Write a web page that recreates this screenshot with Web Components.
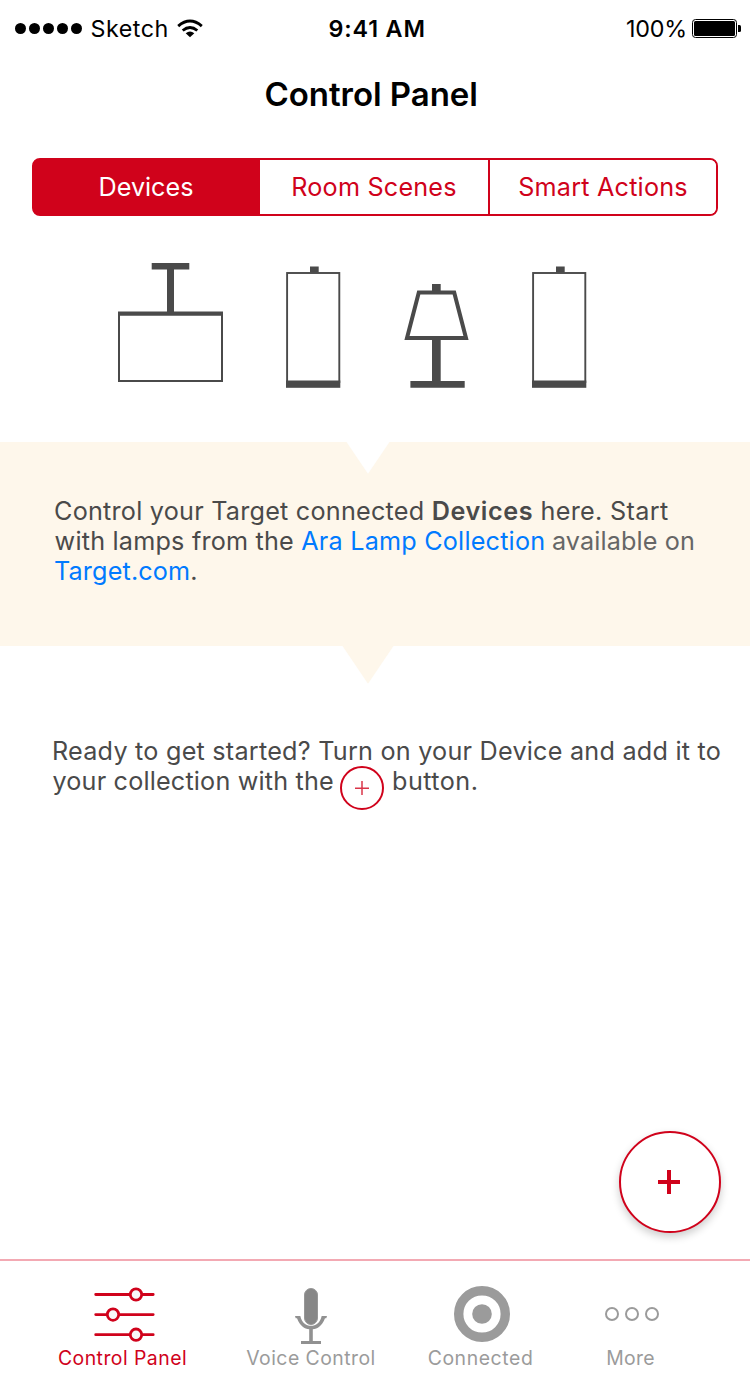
<!DOCTYPE html>
<html lang="en">
<head>
<meta charset="utf-8">
<title>Control Panel</title>
<style>
html,body{margin:0;padding:0;background:#fff}
body{width:750px;height:1386px;overflow:hidden;font-family:Inter,"Liberation Sans",sans-serif}
</style>
</head>
<body>
<control-app></control-app>
<script>
function define(name, css, html) {
  customElements.define(name, class extends HTMLElement {
    constructor() {
      super();
      const t = document.createElement('template');
      t.innerHTML = '<style>svg{display:block}' + css + '</style>' + html;
      this.attachShadow({ mode: 'open' }).appendChild(t.content.cloneNode(true));
    }
  });
}

define('status-bar', `
:host{display:grid;grid-template-columns:1fr auto 1fr;height:57px;align-items:center;color:#000;font-size:23.3px;line-height:28px;white-space:nowrap}
.left{display:flex;align-items:center;padding-left:15px}
.carrier{letter-spacing:.5px;margin:0 8px 0 7.5px}
.time{font-weight:600;letter-spacing:.85px;width:98px;margin-left:5px}
.right{display:flex;align-items:center;justify-content:flex-end;padding-right:9px}
.pct{letter-spacing:-.19px;width:60px;margin-right:6px}
`, `
<div class="left">
<svg width="68" height="12" viewBox="0 0 68 12"><circle cx="5.5" cy="5.5" r="5.5"/><circle cx="19.5" cy="5.5" r="5.5"/><circle cx="33.5" cy="5.5" r="5.5"/><circle cx="47.5" cy="5.5" r="5.5"/><circle cx="61.5" cy="5.5" r="5.5"/></svg>
<span class="carrier">Sketch</span>
<svg width="27" height="20" viewBox="177 18.500 27 20"><path d="M178.200 25.600Q190 15.600 201.800 25.600M182.700 30Q190 24 197.300 30" fill="none" stroke="#000" stroke-width="2.900"/><path d="M185.700 32.700Q190 29.200 194.300 32.700L190 36.700Z"/></svg>
</div>
<span class="time">9:41 AM</span>
<div class="right"><span class="pct">100%</span>
<svg width="49" height="19" viewBox="0 0 49 19"><rect x=".5" y=".5" width="44" height="18" rx="3" fill="none" stroke="#000"/><rect x="2" y="2" width="41" height="15" rx="1.500"/><path d="M46 6h1.500q1.500 0 1.500 1.500v4q0 1.500-1.500 1.500H46z"/></svg></div>
`);

define('nav-title', `
:host{display:block;height:101px;box-sizing:border-box;padding:17px 0 0 264.5px;font-size:33px;line-height:40px;font-weight:600;letter-spacing:-.04px;color:#000;white-space:nowrap}
`, `<slot></slot>`);

define('segment-item', `
:host{display:flex;align-items:center;justify-content:center;color:#d0021b;background:#fff;border-left:2px solid #d0021b;letter-spacing:.2px}
:host(:first-child){border-left:0}
:host(:last-child){border-radius:0 6px 6px 0}
:host([selected]){background:none;color:#fff;letter-spacing:-.02px}
`, `<slot></slot>`);

define('segmented-control', `
:host{display:grid;grid-template-columns:224px 230px 1fr;box-sizing:border-box;height:58px;margin:0 32px;border:2px solid #d0021b;border-radius:8px;background:linear-gradient(#d0021b,#d0021b) border-box 0 0/226px 100% no-repeat;font-size:25.2px;line-height:54px;white-space:nowrap}
`, `<slot></slot>`);

define('lamp-icon', `
:host{display:block}
svg{display:none}
:host([kind=pendant]) .pendant,:host([kind=column]) .column,:host([kind=table]) .table{display:block}
`, `
<svg class="pendant" width="105" height="126" viewBox="118 262 105 126" fill="#4a4a4a"><path d="M151.700 263h37.600v6.500H174V311.500h49v4.300H118v-4.300h49V269.500h-15.300z"/><rect x="119" y="314" width="103" height="67" fill="none" stroke="#4a4a4a" stroke-width="2"/></svg>
<svg class="column" width="55" height="126" viewBox="286 262 55 126" fill="#4a4a4a"><rect x="310" y="266.500" width="8.700" height="6"/><rect x="287.100" y="273" width="52.200" height="109" fill="none" stroke="#4a4a4a" stroke-width="1.900"/><rect x="286" y="380.500" width="54.300" height="7.300"/></svg>
<svg class="table" width="65" height="126" viewBox="404 262 65 126" fill="#4a4a4a"><path d="M432 284h8.700v7H432zM432 339h8.700v42h24v6.800h-54.300V381H432z"/><path d="M418.800 292.500h35.400L466 338h-59z" fill="none" stroke="#4a4a4a" stroke-width="4"/></svg>
`);

define('lamp-gallery', `
:host{display:flex;height:226px;box-sizing:border-box;padding:46px 0 0 118px}
lamp-icon+lamp-icon{margin-left:63px}
`, `<lamp-icon kind="pendant"></lamp-icon><lamp-icon kind="column"></lamp-icon><lamp-icon kind="table"></lamp-icon><lamp-icon kind="column"></lamp-icon>`);

define('text-line', `
:host{display:block;height:30px;line-height:30px;white-space:nowrap}
`, `<slot></slot>`);

define('info-banner', `
:host{display:block;position:relative;height:204px;box-sizing:border-box;padding:54px 0 0 54px;background:#fef7eb;color:#4a4a4a;font-size:25.2px}
.notch{position:absolute;left:346px;top:0}
.pointer{position:absolute;left:342px;top:204px}
b{font-weight:600;letter-spacing:.57px}
a{color:#007aff}
.dim{color:#666;margin-left:-.7px;letter-spacing:.12px}
`, `
<svg class="notch" width="44" height="32" viewBox="0 0 44 32"><path d="M0.500 0h43L22 31.700z" fill="#fff"/></svg>
<svg class="pointer" width="52" height="38" viewBox="0 0 52 38"><path d="M0.500 0h51L26 37.700z" fill="#fef7eb"/></svg>
<text-line style="letter-spacing:.23px">Control your Target connected <b>Devices</b> <span style="letter-spacing:.33px">here. Start</span></text-line>
<text-line style="letter-spacing:.205px;padding-left:.6px">with lamps from the <a>Ara Lamp Collection</a> <span class="dim">available on</span></text-line>
<text-line style="letter-spacing:.15px"><a>Target.com</a>.</text-line>
`);

define('get-started', `
:host{display:block;padding:90px 0 0 52px;color:#4a4a4a;font-size:25.2px}
.row{display:flex}
svg{margin:0 8px 0 5.500px;flex:none}
`, `
<text-line style="letter-spacing:.23px">Ready to get started? Turn on your Device and add it to</text-line>
<div class="row"><text-line style="letter-spacing:.175px;width:282px;padding-left:.5px">your collection with the</text-line>
<svg width="44" height="44" viewBox="340 766 44 44"><circle cx="362" cy="788" r="21" fill="#fff" stroke="#d0021b" stroke-width="2"/><path d="M355 788.300h14M362 781v14" stroke="#d0021b" stroke-opacity=".8" stroke-width="1.500"/></svg>
<text-line style="letter-spacing:.46px">button.</text-line></div>
`);

define('add-button', `
:host{position:absolute;left:619px;top:1131px;width:102px;height:102px;box-sizing:border-box;border:2px solid #d0021b;border-radius:50%;background:#fff;box-shadow:0 4px 8px rgba(0,0,0,.2)}
`, `<svg width="98" height="98" viewBox="621 1133 98 98"><path d="M658 1182h22M669 1170v24" stroke="#d0021b" stroke-width="4"/></svg>`);

define('tab-item', `
:host{display:flex;flex-direction:column;align-items:center;color:#9b9b9b;font-size:19.4px;line-height:24px;letter-spacing:.47px;white-space:nowrap}
:host([active]){color:#d0021b}
.label{display:block}
`, `<slot name="icon"></slot><span class="label"><slot></slot></span>`);

define('tab-bar', `
:host{display:grid;grid-template-columns:189px 188px 151px 149px;box-sizing:border-box;height:127px;padding-left:28px;border-top:2px solid #f3a9b3;background:#fff}
`, `
<tab-item active><svg slot="icon" width="189" height="85" viewBox="28 1261 189 85"><g fill="none" stroke="#d0021b" stroke-width="2.800" stroke-linecap="round"><path d="M95.700 1294.500h57.500M95.700 1314.600h57.500M95.700 1334.700h57.500"/><g fill="#f8f8f8"><circle cx="136" cy="1294.500" r="5.700"/><circle cx="113" cy="1314.600" r="5.700"/><circle cx="136" cy="1334.700" r="5.700"/></g></g></svg>Control Panel</tab-item>
<tab-item><svg slot="icon" width="188" height="85" viewBox="217 1261 188 85"><rect x="304.500" y="1288.500" width="13" height="36" rx="6.500" fill="#878787" stroke="#979797"/><path d="M295 1316H300.300C302 1323 306 1325.800 311 1325.800S320 1323 321.700 1316H327L326.300 1318.200H325C322 1326 317.500 1328.800 312.800 1329.200V1341H321V1344H301V1341H309.200V1329.200C304.500 1328.800 300 1326 297 1318.200H295.700Z" fill="#919191"/></svg>Voice Control</tab-item>
<tab-item style="letter-spacing:.59px"><svg slot="icon" width="151" height="85" viewBox="405 1261 151 85"><circle cx="482" cy="1314" r="23.300" fill="none" stroke="#9b9b9b" stroke-width="9.400"/><circle cx="482" cy="1314" r="9.800" fill="#9b9b9b"/></svg>Connected</tab-item>
<tab-item style="letter-spacing:.3px"><svg slot="icon" width="149" height="85" viewBox="556 1261 149 85"><g fill="none" stroke="#9b9b9b" stroke-width="2"><circle cx="612" cy="1314" r="6"/><circle cx="632" cy="1314" r="6"/><circle cx="652" cy="1314" r="6"/></g></svg>More</tab-item>
`);

define('control-app', `
:host{display:flex;flex-direction:column;position:relative;width:750px;height:1386px;background:#fff}
get-started{flex:1;min-height:0}
`, `
<status-bar></status-bar>
<nav-title>Control Panel</nav-title>
<segmented-control><segment-item selected>Devices</segment-item><segment-item>Room Scenes</segment-item><segment-item>Smart Actions</segment-item></segmented-control>
<lamp-gallery></lamp-gallery>
<info-banner></info-banner>
<get-started></get-started>
<add-button></add-button>
<tab-bar></tab-bar>
`);
</script>
</body>
</html>
